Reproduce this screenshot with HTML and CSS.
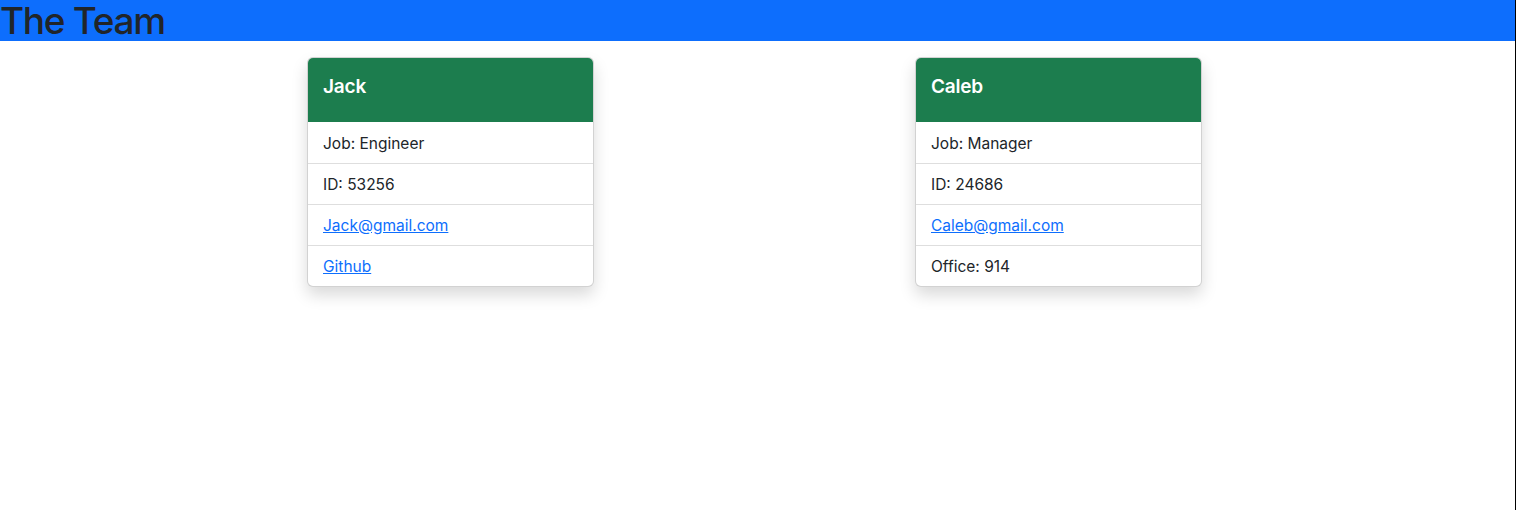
FILE: index.html
```html
<!DOCTYPE html>
<html lang="en">
<head>
<meta charset="utf-8">
<title>The Team</title>
<link rel="stylesheet" href="styles.css">
</head>
<body>
<header class="topbar">
  <h1 class="title">The Team</h1>
</header>
<main class="team">
  <section class="card">
    <div class="card-body"><h5 class="card-title">Jack</h5></div>
    <ul class="list">
      <li class="item">Job: Engineer</li>
      <li class="item">ID: 53256</li>
      <li class="item"><a href="#" class="link">Jack@gmail.com</a></li>
      <li class="item"><a href="#" class="link">Github</a></li>
    </ul>
  </section>
  <section class="card">
    <div class="card-body"><h5 class="card-title">Caleb</h5></div>
    <ul class="list">
      <li class="item">Job: Manager</li>
      <li class="item">ID: 24686</li>
      <li class="item"><a href="#" class="link">Caleb@gmail.com</a></li>
      <li class="item">Office: 914</li>
    </ul>
  </section>
</main>
</body>
</html>
```

FILE: styles.css
```css
* { box-sizing: border-box; }
html, body { margin: 0; padding: 0; }
body {
  width: 1516px;
  min-height: 510px;
  border-right: 1px solid #000;
  background: #fff;
  color: #212529;
  font-family: Inter, "Noto Sans", sans-serif;
  font-size: 16px;
  line-height: 24px;
}
.topbar {
  height: 41px;
  background: #0d6efd;
  overflow: visible;
}
.title {
  margin: 0;
  padding-top: 4px;
  font-size: 37px;
  font-weight: 500;
  line-height: 33px;
  height: 41px;
  color: #212529;
  letter-spacing: -1.3px;
  white-space: nowrap;
}
.team {
  display: flex;
  align-items: flex-start;
  gap: 321px;
  padding: 16px 0 0 307px;
}
.card {
  width: 287px;
  border: 1px solid rgba(0,0,0,0.175);
  border-radius: 6px;
  box-shadow: 0 8px 16px rgba(0,0,0,0.15);
  overflow: hidden;
  background: #fff;
}
.card-body {
  background: #1c7d4e;
  color: #fff;
  padding: 17px 15px 7px;
  height: 64px;
}
.card-title {
  margin: 0;
  font-size: 19px;
  font-weight: 600;
  line-height: 24px;
  letter-spacing: -0.2px;
}
.list {
  list-style: none;
  margin: 0;
  padding: 0;
}
.item {
  padding: 9px 15px 7px;
  border-top: 1px solid rgba(0,0,0,0.13);
  line-height: 24px;
  font-size: 15.5px;
}
.item:first-child { border-top-color: #fff; }
.link { color: #0d6efd; text-decoration: underline; }
```
